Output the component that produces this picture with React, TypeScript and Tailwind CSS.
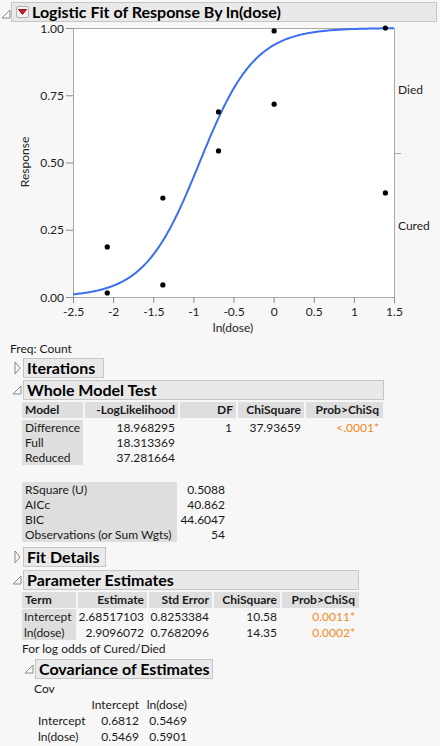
import React from "react";

const X = (v: number) => 73 + (v + 2.5) * 80.25;
const Y = (p: number) => 297 - p * 269;

const curve = Array.from({ length: 201 }, (_, i) => {
  const v = -2.5 + i * 0.02;
  const p = 1 / (1 + Math.exp(-(2.68517103 + 2.9096072 * v)));
  return `${i ? "L" : "M"}${X(v).toFixed(2)},${Y(p).toFixed(2)}`;
}).join(" ");

const pts: [number, number][] = [
  [-2.0794, 0.186],
  [-2.0794, 0.015],
  [-1.3863, 0.368],
  [-1.3863, 0.045],
  [-0.6931, 0.688],
  [-0.6931, 0.543],
  [0, 0.989],
  [0, 0.717],
  [1.3863, 1.0],
  [1.3863, 0.387],
];

const xticks = ["-2.5", "-2", "-1.5", "-1", "-0.5", "0", "0.5", "1", "1.5"];
const yticks = ["0.00", "0.25", "0.50", "0.75", "1.00"];

function OpenTri() {
  return (
    <svg width="10" height="10" viewBox="0 0 10 10" className="block">
      <polygon points="9,1 9,9 1,9" fill="#fafafa" stroke="#8a8a8a" strokeWidth="1" />
    </svg>
  );
}

function ClosedTri() {
  return (
    <svg width="7" height="14" viewBox="0 0 7 14" className="block">
      <polygon points="1,1 6,7 1,13" fill="#fafafa" stroke="#8a8a8a" strokeWidth="1" />
    </svg>
  );
}

function Chart() {
  return (
    <svg width="440" height="318" viewBox="0 22 440 318" className="block">
      <rect x="73.5" y="28.5" width="321" height="269" fill="#ffffff" stroke="#a9a9a9" strokeWidth="1" />
      {yticks.map((t, i) => {
        const y = Y(i * 0.25);
        return (
          <g key={t}>
            <line x1="66" y1={y + 0.5} x2="73" y2={y + 0.5} stroke="#8c8c8c" />
            <text x="64" y={y + 4.5} textAnchor="end" fontSize="12" fill="#222">
              {t}
            </text>
          </g>
        );
      })}
      {xticks.map((t, i) => {
        const x = X(-2.5 + i * 0.5);
        return (
          <g key={t}>
            <line x1={x + 0.5} y1="297" x2={x + 0.5} y2="303" stroke="#8c8c8c" />
            <text x={x + 0.5} y="316" textAnchor="middle" fontSize="12" fill="#222">
              {t}
            </text>
          </g>
        );
      })}
      <line x1="394" y1="153.5" x2="401" y2="153.5" stroke="#a9a9a9" />
      <text x="398" y="94" fontSize="12" fill="#222">Died</text>
      <text x="398" y="230" fontSize="12" fill="#222">Cured</text>
      <text x="233" y="332" textAnchor="middle" fontSize="12" fill="#222">ln(dose)</text>
      <text x="25" y="162" textAnchor="middle" fontSize="12" fill="#222" transform="rotate(-90 25 162)" dy="4">
        Response
      </text>
      <path d={curve} fill="none" stroke="#3b6ff0" strokeWidth="2" />
      {pts.map(([v, p], i) => (
        <circle key={i} cx={X(v) + 0.5} cy={Y(p)} r="2.6" fill="#000" />
      ))}
    </svg>
  );
}

const box = "h-[20px] border border-[#c6c6c6] bg-[#e9e9e9] font-bold text-[16px] leading-[18px] pl-[3px] text-black";
const cell = "bg-[#dedede]";

export default function App() {
  return (
    <div
      className="w-[440px] h-[746px] overflow-hidden bg-[#f7f7f7] text-[12px] text-[#1a1a1a]"
      style={{ fontFamily: "Lato, 'Liberation Sans', sans-serif" }}
    >
      {/* Title */}
      <div className="flex items-center pt-[2px] h-[22px]">
        <div className="w-[11px] pl-[1px] pt-[4px]">
          <OpenTri />
        </div>
        <div className="flex items-center w-[426px] h-[20px] border border-[#c6c6c6] bg-[#e9e9e9]">
          <div className="ml-[4px] w-[13px] h-[12px] border border-[#b0b0b0] bg-[#f4f4f4] rounded-[2px] flex items-center justify-center">
            <svg width="9" height="6" viewBox="0 0 9 6" className="block">
              <polygon points="0.5,0.5 8.5,0.5 4.5,5.5" fill="#e0121b" stroke="#6b0000" strokeWidth="0.8" />
            </svg>
          </div>
          <div className="ml-[3px] font-bold text-[16px] leading-[18px] text-black">
            Logistic Fit of Response By ln(dose)
          </div>
        </div>
      </div>

      <Chart />

      <div className="ml-[10px] h-[16px] leading-[16px] mt-[1px]">Freq: Count</div>

      {/* Iterations */}
      <div className="flex items-center mt-[1px]">
        <div className="w-[23px] flex justify-end pr-[2px]">
          <ClosedTri />
        </div>
        <div className={`${box} w-[81px]`}>Iterations</div>
      </div>

      {/* Whole Model Test */}
      <div className="flex items-center mt-[2px]">
        <div className="w-[23px] flex justify-end pr-[1px]">
          <OpenTri />
        </div>
        <div className={`${box} w-[361px]`}>Whole Model Test</div>
      </div>

      <div className="ml-[22px] mt-[2px]">
        <div className="flex gap-[2px] h-[16px] leading-[16px] font-bold">
          <div className={`${cell} w-[61px] pl-[3px]`}>Model</div>
          <div className={`${cell} w-[93px] text-right pr-[3px]`}>-LogLikelihood</div>
          <div className={`${cell} w-[56px] text-right pr-[3px]`}>DF</div>
          <div className={`${cell} w-[66px] text-right pr-[3px]`}>ChiSquare</div>
          <div className={`${cell} w-[77px] text-right pr-[4px]`}>Prob&gt;ChiSq</div>
        </div>
        <div className="flex gap-[2px] mt-[2px] leading-[15px]">
          <div className={`${cell} w-[61px] pl-[3px]`}>
            <div>Difference</div>
            <div>Full</div>
            <div>Reduced</div>
          </div>
          <div className="w-[93px] text-right pr-[3px]">
            <div>18.968295</div>
            <div>18.313369</div>
            <div>37.281664</div>
          </div>
          <div className="w-[56px] text-right pr-[4px]">
            <div>1</div>
          </div>
          <div className="w-[66px] text-right pr-[3px]">
            <div>37.93659</div>
          </div>
          <div className="w-[77px] text-right pr-[4px] text-[#f08a24]">
            <div>&lt;.0001*</div>
          </div>
        </div>
      </div>

      {/* Stats */}
      <div className="ml-[22px] mt-[17px] flex leading-[15px]">
        <div className={`${cell} w-[155px] pl-[3px]`}>
          <div>RSquare (U)</div>
          <div>AICc</div>
          <div>BIC</div>
          <div>Observations (or Sum Wgts)</div>
        </div>
        <div className="w-[48px] text-right">
          <div>0.5088</div>
          <div>40.862</div>
          <div>44.6047</div>
          <div>54</div>
        </div>
      </div>

      {/* Fit Details */}
      <div className="flex items-center mt-[5px]">
        <div className="w-[23px] flex justify-end pr-[2px]">
          <ClosedTri />
        </div>
        <div className={`${box} w-[83px]`}>Fit Details</div>
      </div>

      {/* Parameter Estimates */}
      <div className="flex items-center mt-[3px]">
        <div className="w-[23px] flex justify-end pr-[1px]">
          <OpenTri />
        </div>
        <div className={`${box} w-[336px]`}>Parameter Estimates</div>
      </div>

      <div className="ml-[22px] mt-[2px]">
        <div className="flex gap-[2px] h-[16px] leading-[16px] font-bold">
          <div className={`${cell} w-[54px] pl-[3px]`}>Term</div>
          <div className={`${cell} w-[69px] text-right pr-[3px]`}>Estimate</div>
          <div className={`${cell} w-[63px] text-right pr-[3px]`}>Std Error</div>
          <div className={`${cell} w-[66px] text-right pr-[3px]`}>ChiSquare</div>
          <div className={`${cell} w-[77px] text-right pr-[4px]`}>Prob&gt;ChiSq</div>
        </div>
        <div className="flex gap-[2px] mt-[1px] leading-[15.5px]">
          <div className={`${cell} w-[54px] pl-[2px]`}>
            <div>Intercept</div>
            <div>ln(dose)</div>
          </div>
          <div className="w-[69px] text-right pr-[3px]">
            <div>2.68517103</div>
            <div>2.9096072</div>
          </div>
          <div className="w-[63px] text-right pr-[3px]">
            <div>0.8253384</div>
            <div>0.7682096</div>
          </div>
          <div className="w-[66px] text-right pr-[3px]">
            <div>10.58</div>
            <div>14.35</div>
          </div>
          <div className="w-[77px] text-right pr-[4px] text-[#f08a24]">
            <div>0.0011*</div>
            <div>0.0002*</div>
          </div>
        </div>
        <div className="h-[16px] leading-[16px] mt-[1px]">For log odds of Cured/Died</div>
      </div>

      {/* Covariance */}
      <div className="flex items-center mt-[2px]">
        <div className="w-[35px] flex justify-end pr-[1px]">
          <OpenTri />
        </div>
        <div className={`${box} w-[178px]`}>Covariance of Estimates</div>
      </div>

      <div className="ml-[34px] mt-[2px] leading-[16px]">
        <div>Cov</div>
        <div className="grid grid-cols-[57px_48px_48px] mt-[0px]">
          <div></div>
          <div className="text-right">Intercept</div>
          <div className="text-right">ln(dose)</div>
          <div className="pl-[4px]">Intercept</div>
          <div className="text-right">0.6812</div>
          <div className="text-right">0.5469</div>
          <div className="pl-[4px]">ln(dose)</div>
          <div className="text-right">0.5469</div>
          <div className="text-right">0.5901</div>
        </div>
      </div>
    </div>
  );
}
